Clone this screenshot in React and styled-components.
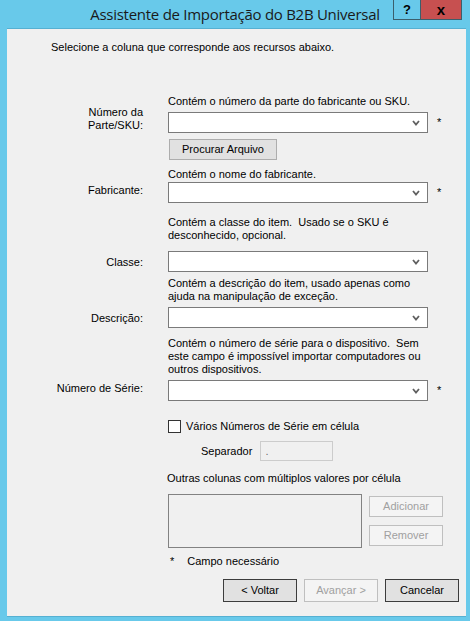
import React from 'react'
import styled, { createGlobalStyle } from 'styled-components'

const GlobalStyle = createGlobalStyle`
    body {
        margin: 0;
        background: #ffffff;
    }
`

const Window = styled.div`
    width: 470px;
    height: 621px;
    background-color: #68c9ea;
    display: flex;
    flex-direction: column;
    font-family: 'Liberation Sans', Arial, sans-serif;
    font-size: 11px;
    line-height: 13px;
    color: #000;
`

const TitleBar = styled.div`
    height: 28px;
    display: grid;
    grid-template-columns: 1fr auto 1fr;
    align-items: start;
`

const Title = styled.div`
    grid-column: 2;
    font-family: 'Open Sans', 'Noto Sans', sans-serif;
    font-size: 15px;
    letter-spacing: -0.27px;
    line-height: 20px;
    padding-top: 4px;
    color: #1a1a1a;
    white-space: nowrap;
`

const Controls = styled.div`
    grid-column: 3;
    justify-self: end;
    display: flex;
    margin-right: 8px;
`

const CaptionButton = styled.div`
    width: ${(props) => props.w}px;
    height: 20px;
    box-sizing: border-box;
    border: 1px solid #3b5f6c;
    border-top: none;
    border-left-width: ${(props) => (props.close ? '0' : '1px')};
    background-color: ${(props) => (props.close ? '#c75050' : 'transparent')};
    display: flex;
    align-items: center;
    justify-content: center;
    font-family: 'Liberation Sans', Arial, sans-serif;
    font-weight: bold;
    font-size: ${(props) => (props.close ? '15px' : '13px')};
    color: #000;
`

const Client = styled.div`
    flex: 1;
    margin: 0 4px 4px 7px;
    background-color: #f0f0f0;
    border-top: 1px solid #55b0d2;
    border-bottom: 1px solid #55b0d2;
    padding: 12px 7px 0 44px;
    display: flex;
    flex-direction: column;
`

const Intro = styled.div`
    white-space: nowrap;
`

const Hint = styled.div`
    margin-top: ${(props) => props.mt}px;
    margin-left: 117px;
    white-space: pre;
`

const Row = styled.div`
    margin-top: ${(props) => props.mt}px;
    display: grid;
    grid-template-columns: 117px 260px 1fr;
    align-items: start;
`

const Label = styled.div`
    margin-top: ${(props) => props.offset}px;
    padding-right: 25px;
    text-align: right;
`

const Combo = styled.div`
    height: 21px;
    box-sizing: border-box;
    background-color: #fff;
    border: 1px solid #7a7a7a;
    display: flex;
    align-items: center;
    justify-content: flex-end;
    padding-right: 7px;
`

const Star = styled.div`
    padding-left: 9px;
    margin-top: 4px;
    font-size: 11px;
`

const Button = styled.div`
    width: ${(props) => props.w}px;
    height: ${(props) => props.h || 21}px;
    box-sizing: border-box;
    border: 1px solid ${(props) => (props.disabled ? '#bfbfbf' : props.dark ? '#3c3c3c' : '#adadad')};
    background-color: ${(props) => (props.disabled ? '#f4f4f4' : '#e1e1e1')};
    color: ${(props) => (props.disabled ? '#a0a0a0' : '#000')};
    display: flex;
    align-items: center;
    justify-content: center;
    white-space: nowrap;
`

const FieldLine = styled.div`
    margin-top: ${(props) => props.mt}px;
    margin-left: ${(props) => 117 + (props.indent || 0)}px;
    display: flex;
    align-items: ${(props) => props.align || 'center'};
    gap: ${(props) => props.gap || 0}px;
`

const CheckBox = styled.div`
    width: 13px;
    height: 13px;
    box-sizing: border-box;
    border: 1px solid #333;
    background-color: #fff;
`

const TextBox = styled.div`
    width: 73px;
    height: 20px;
    box-sizing: border-box;
    border: 1px solid #cccccc;
    background-color: #f0f0f0;
    padding-left: 4px;
    display: flex;
    align-items: center;
    color: #6d6d6d;
`

const ListBox = styled.div`
    width: 194px;
    height: 54px;
    box-sizing: border-box;
    border: 1px solid #828282;
    background-color: #f0f0f0;
`

const SideButtons = styled.div`
    margin-top: 2px;
    display: flex;
    flex-direction: column;
    gap: 8px;
`

const Required = styled.div`
    margin-top: ${(props) => props.mt}px;
    margin-left: 119px;
    display: flex;
    gap: 13px;
`

const Footer = styled.div`
    margin-top: 11px;
    display: flex;
    justify-content: flex-end;
    gap: 7px;
`

const Chevron = () => (
    <svg width='8' height='6' viewBox='0 0 8 6'>
        <path d='M1 1 L4 4.5 L7 1' fill='none' stroke='#606060' strokeWidth='1.8' />
    </svg>
)

const App = () => {
    return (
        <>
            <GlobalStyle />
            <Window>
                <TitleBar>
                    <Title>Assistente de Importação do B2B Universal</Title>
                    <Controls>
                        <CaptionButton w={28}>?</CaptionButton>
                        <CaptionButton w={41} close>
                            x
                        </CaptionButton>
                    </Controls>
                </TitleBar>
                <Client>
                    <Intro>Selecione a coluna que corresponde aos recursos abaixo.</Intro>

                    <Hint mt={41}>Contém o número da parte do fabricante ou SKU.</Hint>
                    <Row mt={4}>
                        <Label offset={-6}>
                            Número da
                            <br />
                            Parte/SKU:
                        </Label>
                        <Combo>
                            <Chevron />
                        </Combo>
                        <Star>*</Star>
                    </Row>
                    <FieldLine mt={6} indent={1}>
                        <Button w={108}>Procurar Arquivo</Button>
                    </FieldLine>

                    <Hint mt={8}>Contém o nome do fabricante.</Hint>
                    <Row mt={1}>
                        <Label offset={2}>Fabricante:</Label>
                        <Combo>
                            <Chevron />
                        </Combo>
                        <Star>*</Star>
                    </Row>

                    <Hint mt={13}>
                        {'Contém a classe do item.  Usado se o SKU é\ndesconhecido, opcional.'}
                    </Hint>
                    <Row mt={9}>
                        <Label offset={5}>Classe:</Label>
                        <Combo>
                            <Chevron />
                        </Combo>
                    </Row>

                    <Hint mt={5}>
                        {'Contém a descrição do item, usado apenas como\najuda na manipulação de exceção.'}
                    </Hint>
                    <Row mt={4}>
                        <Label offset={5}>Descrição:</Label>
                        <Combo>
                            <Chevron />
                        </Combo>
                    </Row>

                    <Hint mt={9}>
                        {'Contém o número de série para o dispositivo.  Sem\neste campo é impossível importar computadores ou\noutros dispositivos.'}
                    </Hint>
                    <Row mt={4}>
                        <Label offset={2}>Número de Série:</Label>
                        <Combo>
                            <Chevron />
                        </Combo>
                        <Star>*</Star>
                    </Row>

                    <FieldLine mt={19} gap={5}>
                        <CheckBox />
                        <span>Vários Números de Série em célula</span>
                    </FieldLine>

                    <FieldLine mt={8} indent={33} gap={8}>
                        <span>Separador</span>
                        <TextBox>.</TextBox>
                    </FieldLine>

                    <FieldLine mt={11} indent={-1}>
                        Outras colunas com múltiplos valores por célula
                    </FieldLine>

                    <FieldLine mt={9} gap={7} align='start'>
                        <ListBox />
                        <SideButtons>
                            <Button w={74} disabled>
                                Adicionar
                            </Button>
                            <Button w={74} disabled>
                                Remover
                            </Button>
                        </SideButtons>
                    </FieldLine>

                    <Required mt={7}>
                        <span>*</span>
                        <span>Campo necessário</span>
                    </Required>

                    <Footer>
                        <Button w={74} h={23} dark>
                            &lt; Voltar
                        </Button>
                        <Button w={74} h={23} disabled>
                            Avançar &gt;
                        </Button>
                        <Button w={74} h={23} dark>
                            Cancelar
                        </Button>
                    </Footer>
                </Client>
            </Window>
        </>
    )
}

export default App
